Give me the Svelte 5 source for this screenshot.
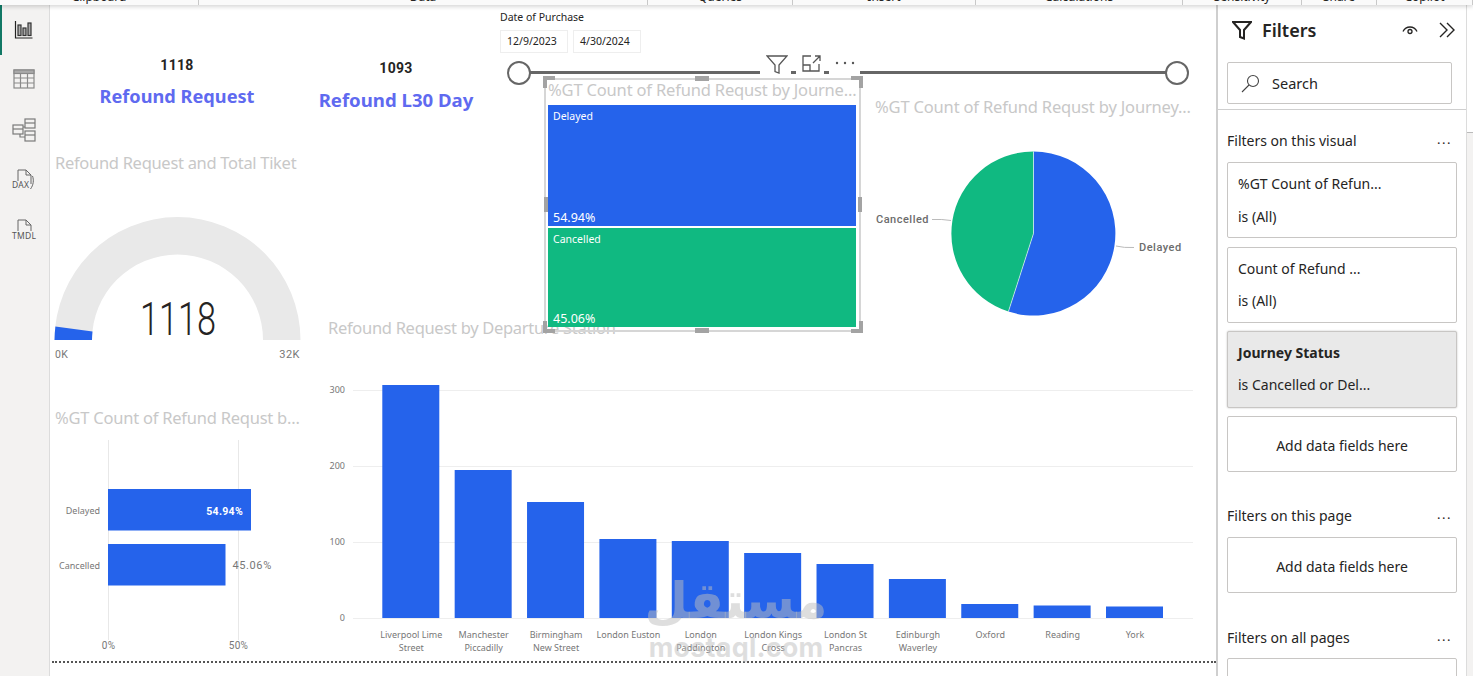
<script>
  const ribbon = [
    ['Clipboard', 199], ['Data', 449], ['Queries', 145], ['Insert', 183],
    ['Calculations', 207], ['Sensitivity', 119], ['Share', 75], ['Copilot', 96]
  ];
  const grid = [[300, 390], [200, 466], [100, 542], [0, 618]];
  const base = 618;
  const stations = [
    { top: 385, l: ['Liverpool Lime', 'Street'] },
    { top: 470, l: ['Manchester', 'Piccadilly'] },
    { top: 502, l: ['Birmingham', 'New Street'] },
    { top: 539, l: ['London Euston'] },
    { top: 541, l: ['London', 'Paddington'] },
    { top: 553, l: ['London Kings', 'Cross'] },
    { top: 564, l: ['London St', 'Pancras'] },
    { top: 579, l: ['Edinburgh', 'Waverley'] },
    { top: 604, l: ['Oxford'] },
    { top: 605.5, l: ['Reading'] },
    { top: 606.5, l: ['York'] }
  ];
  const barX = (i) => 382.3 + i * 72.37;
</script>

<div class="app">
  <header class="ribbon">
    {#each ribbon as [name, width]}
      <div class="group" style="width:{width}px"><span>{name}</span></div>
    {/each}
  </header>

  <div class="body">
    <nav class="rail">
      <div class="rail-item active">
        <svg width="20" height="20" viewBox="0 0 20 20" fill="none" stroke="#333" stroke-width="1.2">
          <path d="M1.5 1v17h17" stroke="#222"/>
          <rect x="4" y="5" width="3" height="10.5" fill="#aaa"/>
          <rect x="9" y="8" width="3" height="7.5" fill="#aaa"/>
          <rect x="14" y="3" width="3" height="12.5" fill="#aaa"/>
        </svg>
      </div>
      <div class="rail-item table-icon">
        <svg width="22" height="20" viewBox="0 0 22 20" fill="none" stroke="#8a8a8a" stroke-width="1.2">
          <rect x="1" y="1" width="20" height="18" fill="#f3f2f1"/>
          <rect x="1" y="1" width="20" height="3.5" fill="#a9a9a9"/>
          <path d="M1 9h20M1 14h20M7.5 4v15M14.500 4v15"/>
        </svg>
      </div>
      <div class="rail-item">
        <svg width="24" height="24" viewBox="0 0 24 24" fill="none" stroke="#7a7a7a" stroke-width="1.2">
          <rect x="1" y="7" width="10" height="9"/><path d="M1 11h10"/>
          <rect x="13" y="1" width="10" height="9"/><path d="M13 5h10"/>
          <rect x="13" y="13" width="10" height="10"/><path d="M13 17h10"/>
          <path d="M11 9h2M8 16v3h5"/>
        </svg>
      </div>
      <div class="rail-item">
        <svg width="24" height="24" viewBox="0 0 24 24" fill="none" stroke="#666" stroke-width="1">
          <path d="M6 13V2h8l5 5v9M14 2v5h5M20.500 8c1.500 4 1 9-2 13"/>
          <text x="0" y="20" class="rail-txt">DAX</text>
        </svg>
      </div>
      <div class="rail-item">
        <svg width="26" height="24" viewBox="0 0 26 24" fill="none" stroke="#666" stroke-width="1">
          <path d="M7 13V2h8l5 5v6M15 2v5h5"/>
          <text x="1" y="21" class="rail-txt">TMDL</text>
        </svg>
      </div>
    </nav>

    <main class="canvas">
      <section class="kpi kpi-a">
        <div class="kpi-num">1118</div>
        <div class="kpi-label">Refound Request</div>
      </section>
      <section class="kpi kpi-b">
        <div class="kpi-num">1093</div>
        <div class="kpi-label">Refound L30 Day</div>
      </section>

      <section class="visual gauge">
        <h2 class="title tight">Refound Request and Total Tiket</h2>
        <svg viewBox="50 200 260 170" class="plot">
          <path d="M54.500 340A123 123 0 0 1 300.500 340H263A85.500 85.500 0 0 0 92 340Z" fill="#e9e9e9"/>
          <path d="M54.500 340A123 123 0 0 1 55.400 326.500L92.500 331.500A85.500 85.500 0 0 0 92 340Z" fill="#2563eb"/>
          <text x="178" y="335" class="gauge-val" text-anchor="middle" textLength="76" lengthAdjust="spacingAndGlyphs">1118</text>
          <text x="55" y="358" class="din">0K</text>
          <text x="300" y="358" class="din big" text-anchor="end">32K</text>
        </svg>
      </section>

      <section class="visual hbar">
        <h2 class="title">%GT Count of Refund Requst b...</h2>
        <svg viewBox="50 430 260 225" class="plot">
          <path d="M108.500 440V640M238.500 440V640" stroke="#e8e8e8"/>
          <rect x="108" y="489" width="143" height="41.500" fill="#2563eb"/>
          <rect x="108" y="544" width="117.500" height="41.500" fill="#2563eb"/>
          <text x="100" y="514" class="seg" text-anchor="end">Delayed</text>
          <text x="100" y="569" class="seg" text-anchor="end">Cancelled</text>
          <text x="243" y="514.500" class="din val-in" text-anchor="end">54.94%</text>
          <text x="232.500" y="569" class="din wide">45.06%</text>
          <text x="108.500" y="649" class="din small" text-anchor="middle">0%</text>
          <text x="238.500" y="649" class="din small" text-anchor="middle">50%</text>
        </svg>
      </section>

      <section class="visual column">
        <h2 class="title tight">Refound Request by Departure Station</h2>
        <svg viewBox="320 370 880 290" class="plot">
          {#each grid as [v, y]}
            <path d="M353 {y + 0.5}H1193" stroke="#eeeeee"/>
            <text x="345" y={y + 3} class="seg" text-anchor="end">{v}</text>
          {/each}
          {#each stations as s, i}
            <rect x={barX(i)} y={s.top} width="57" height={base - s.top} fill="#2563eb"/>
            {#each s.l as line, j}
              <text x={barX(i) + 29} y={638 + j * 13} class="seg" text-anchor="middle">{line}</text>
            {/each}
          {/each}
        </svg>
      </section>

      <section class="visual pie">
        <h2 class="title loose">%GT Count of Refund Requst by Journey...</h2>
        <svg viewBox="860 130 340 200" class="plot">
          <path d="M1033.500 233.500V151.500A82 82 0 1 1 1008.400 311.600Z" fill="#2563eb"/>
          <path d="M1033.500 233.500L1008.400 311.600A82 82 0 0 1 1033.500 151.500Z" fill="#10b981"/>
          <path d="M1033.500 233.500V151.500M1033.500 233.500L1008.400 311.600" stroke="#fff" stroke-width=".6"/>
          <path d="M932 219.500Q942 219 951 220.500M1116 246Q1124 248 1134 247.500" fill="none" stroke="#bbb"/>
          <text x="876" y="223" class="din pie-l">Cancelled</text>
          <text x="1139" y="251" class="din pie-l">Delayed</text>
        </svg>
      </section>

      <section class="visual treemap">
        <h2 class="title loose">%GT Count of Refund Requst by Journe...</h2>
        <div class="tiles">
          <div class="tile blue"><span>Delayed</span><strong>54.94%</strong></div>
          <div class="tile green"><span>Cancelled</span><strong>45.06%</strong></div>
        </div>
      </section>
      <i class="h tl"></i><i class="h tr"></i><i class="h bl"></i><i class="h br"></i>
      <i class="h tm"></i><i class="h bm"></i><i class="h ml"></i><i class="h mr"></i>

      <section class="slicer">
        <div class="sl-title">Date of Purchase</div>
        <div class="dates"><span>12/9/2023</span><span>4/30/2024</span></div>
        <div class="track"><i class="knob"></i><i class="knob"></i></div>
      </section>

      <div class="vis-head">
        <svg width="22" height="19" viewBox="0 0 22 19" fill="none" stroke="#555" stroke-width="1.300">
          <path d="M1 1h20l-8 9v8l-4-1.500V10Z"/>
        </svg>
        <i class="dash"></i>
        <svg width="19" height="18" viewBox="0 0 19 18" fill="none" stroke="#555" stroke-width="1.300">
          <path d="M9 1H1v15h16V9M1 10h7v6M11 8l7-7M13 1h5v5"/>
        </svg>
        <i class="dash"></i>
        <svg class="dots" width="20" height="4" viewBox="0 0 20 4" fill="#555">
          <circle cx="2" cy="2" r="1.200"/><circle cx="10" cy="2" r="1.200"/><circle cx="18" cy="2" r="1.200"/>
        </svg>
      </div>

      <div class="watermark">
        <div class="wm-ar" lang="ar" dir="rtl">مستقل</div>
        <div class="wm-en">mostaql.com</div>
      </div>
      <div class="page-edge"></div>
    </main>

    <aside class="filters">
      <div class="f-head">
        <svg width="20" height="19" viewBox="0 0 20 19" fill="none" stroke="#252423" stroke-width="2">
          <path d="M1 1h18l-7 8v8.500l-4-1.500V9Z"/>
        </svg>
        <h1>Filters</h1>
        <svg class="eye" width="16" height="10" viewBox="0 0 16 10" fill="none" stroke="#252423" stroke-width="1.300">
          <path d="M1 6.500C4 .5 12 .5 15 6.500"/><circle cx="8" cy="6.500" r="2"/>
        </svg>
        <svg width="16" height="16" viewBox="0 0 16 16" fill="none" stroke="#252423" stroke-width="1.400">
          <path d="M1 1l7 7-7 7M8 1l7 7-7 7"/>
        </svg>
      </div>
      <div class="search">
        <svg width="19" height="19" viewBox="0 0 19 19" fill="none" stroke="#444" stroke-width="1.100">
          <circle cx="12" cy="7" r="5.500"/><path d="M8 11l-7 7"/>
        </svg>
        <span>Search</span>
      </div>
      <div class="f-body">
        <div class="f-sec first"><span>Filters on this visual</span><b>...</b></div>
        <div class="card"><p>%GT Count of Refun...</p><p>is (All)</p></div>
        <div class="card second"><p>Count of Refund ...</p><p>is (All)</p></div>
        <div class="card sel"><p><strong>Journey Status</strong></p><p>is Cancelled or Del...</p></div>
        <div class="card add">Add data fields here</div>
        <div class="f-sec"><span>Filters on this page</span><b>...</b></div>
        <div class="card add">Add data fields here</div>
        <div class="f-sec last"><span>Filters on all pages</span><b>...</b></div>
        <div class="card add"></div>
      </div>
    </aside>
    <div class="strip"><div class="strip-top"></div></div>
  </div>
</div>

<style>
  :global(body) { margin: 0; background: #fff; }
  .app {
    width: 1473px; height: 676px; overflow: hidden; position: relative;
    display: flex; flex-direction: column;
    font-family: "Noto Sans", "Open Sans", sans-serif; color: #252423;
  }
  .ribbon {
    display: flex; height: 5px; flex: none; overflow: hidden; background: #fafafa;
    box-shadow: 0 1px 5px rgba(0,0,0,.22); position: relative; z-index: 9;
  }
  .group {
    flex: none; box-sizing: border-box; border-right: 1px solid #c9c9c9;
    text-align: center; font-size: 12px; line-height: 16px; height: 5px;
  }
  .group span { display: block; margin-top: -11px; }
  .body { flex: 1; display: flex; min-height: 0; }
  .rail {
    width: 50px; flex: none; box-sizing: border-box; background: #f3f2f1;
    border-right: 1px solid #dcdcdc; display: flex; flex-direction: column;
  }
  .rail-item { height: 50px; display: flex; align-items: center; justify-content: center; padding-right: 1px; box-sizing: border-box; }
  .rail-item.active { border-left: 2px solid #117865; padding-right: 3px; }
  .table-icon { padding-bottom: 2px; }
  .rail-txt { font: 400 8.5px "Noto Sans", sans-serif; fill: #555; stroke: none; letter-spacing: .3px; }

  .canvas { position: relative; flex: 1; min-width: 0; overflow: hidden; background: #fff; }

  .kpi { position: absolute; text-align: center; width: 220px; }
  .kpi-a { left: 17px; top: 50px; }
  .kpi-b { left: 236px; top: 53px; }
  .kpi-num { font: 700 14px/20px Roboto, sans-serif; letter-spacing: .3px; color: #252423; }
  .kpi-label { font-weight: 700; font-size: 18.200px; line-height: 24px; color: #5f6af0; margin-top: 9px; }
  .kpi-b .kpi-label { margin-top: 10px; font-size: 18.600px; }

  .visual { position: absolute; display: flex; flex-direction: column; }
  .title {
    margin: 0; font-weight: 400; font-size: 16.500px; line-height: 22px; color: #c8c8c8;
    white-space: nowrap; letter-spacing: -.23px;
  }
  .title.tight { letter-spacing: -.3px; }
  .title.loose { letter-spacing: -.17px; }
  .plot { position: absolute; display: block; }

  .gauge { left: 5px; top: 147px; width: 260px; height: 220px; }
  .gauge .plot { left: -5px; top: 48px; width: 260px; height: 170px; }
  .gauge-val { font: 300 46px Roboto, sans-serif; fill: #252423; }
  .din { font: 400 10.500px Roboto, sans-serif; fill: #777; letter-spacing: .3px; }
  .big { font-size: 11px; letter-spacing: .5px; }
  .wide { font-size: 11px; letter-spacing: .6px; }
  .val-in { fill: #fff; font-weight: 700; }
  .small { font-size: 10px; }
  .pie-l { fill: #6c6c6c; font-size: 11px; font-weight: 500; letter-spacing: .5px; }
  .seg { font: 400 9px "Noto Sans", sans-serif; fill: #777; }

  .hbar { left: 5px; top: 402px; width: 260px; height: 250px; }
  .hbar .plot { left: -5px; top: 23px; width: 260px; height: 225px; }

  .column { left: 278px; top: 312px; width: 880px; height: 340px; }
  .column .plot { left: -8px; top: 53px; width: 880px; height: 290px; }

  .pie { left: 825px; top: 91px; width: 340px; height: 235px; }
  .pie .plot { left: -15px; top: 34px; width: 340px; height: 200px; }

  .treemap {
    left: 494px; top: 73px; width: 317px; height: 254px; box-sizing: border-box;
    border: 2px solid #d6d6d6; padding: 0 3px 3px 2px; background: transparent;
  }
  .treemap .title { line-height: 20px; height: 25px; margin-bottom: 0; }
  .tiles { display: flex; flex-direction: column; gap: 2px; flex: 1; }
  .tile {
    display: flex; flex-direction: column; justify-content: space-between; color: #fff;
    padding: 4px 4px 0 5px; font-size: 10.500px; line-height: 15px;
  }
  .tile strong { font-weight: 400; font-size: 12.500px; line-height: 16px; }
  .blue { background: #2563eb; height: 121px; box-sizing: border-box; }
  .green { background: #10b981; flex: 1; }

  .h { position: absolute; background: #a3a3a3; z-index: 4; }
  .tm, .bm { left: 645px; width: 14px; height: 5px; }
  .tm { top: 71px; } .bm { top: 323px; }
  .ml, .mr { top: 192px; width: 4px; height: 15px; }
  .ml { left: 494px; } .mr { left: 808px; }
  .tl, .tr, .bl, .br { width: 12px; height: 12px; background: none; }
  .tl { left: 493px; top: 71px; border-left: 4px solid #a3a3a3; border-top: 4px solid #a3a3a3; width: 8px; height: 8px; }
  .tr { left: 801px; top: 71px; border-right: 4px solid #a3a3a3; border-top: 4px solid #a3a3a3; width: 8px; height: 8px; }
  .bl { left: 493px; top: 316px; border-left: 4px solid #a3a3a3; border-bottom: 4px solid #a3a3a3; width: 8px; height: 8px; }
  .br { left: 801px; top: 316px; border-right: 4px solid #a3a3a3; border-bottom: 4px solid #a3a3a3; width: 8px; height: 8px; }

  .slicer { position: absolute; left: 450px; top: 5px; width: 690px; z-index: 2; }
  .sl-title { font-size: 10.500px; line-height: 14px; color: #252423; }
  .dates { display: flex; gap: 5px; margin-top: 6px; }
  .dates span {
    width: 68px; height: 23px; box-sizing: border-box; border: 1px solid #eeeeee;
    font-size: 10.500px; line-height: 21px; padding-left: 6px;
  }
  .track {
    position: relative; margin: 18px 0 0 18px; width: 660px; height: 0;
    border-top: 3px solid #666; display: flex; justify-content: space-between;
  }
  .knob {
    width: 20px; height: 20px; border: 2px solid #666; border-radius: 50%; background: #fff;
    margin: -13px -11px 0; flex: none;
  }

  .vis-head {
    position: absolute; left: 710px; top: 48px; width: 100px; height: 24px; background: #fff;
    display: flex; align-items: flex-start; padding: 2px 0 0 6px; box-sizing: border-box; z-index: 3;
  }
  .dash { width: 5px; height: 3px; background: #666; margin: 16px 6px 0 3px; flex: none; }
  .dots { margin-top: 6px; }

  .watermark {
    position: absolute; left: 586px; top: 565px; width: 200px; text-align: center;
    color: rgba(190,190,190,.5); z-index: 6; pointer-events: none;
  }
  .wm-ar { font: 700 50px/62px "DejaVu Sans", sans-serif; }
  .wm-en { font: 700 27px/28px Inter, sans-serif; letter-spacing: .2px; margin-top: 2px; }

  .page-edge {
    position: absolute; left: 2px; right: 0; top: 656px; border-top: 2px dotted #555; z-index: 1;
  }

  .filters {
    width: 251px; flex: none; box-sizing: border-box; background: #fff; overflow: hidden;
    border-left: 2px solid #cfcfcf; border-right: 1px solid #dcdcdc; display: flex; flex-direction: column;
  }
  .f-head { display: flex; align-items: center; height: 50px; padding: 0 11px 0 14px; flex: none; box-sizing: border-box; margin-top: 0; }
  .f-head h1 { margin: 0 0 0 10px; font-size: 18px; font-weight: 600; flex: 1; color: #252423; }
  .eye { margin-right: 21px; }
  .search {
    margin: 7px 14px 0 9px; height: 42px; flex: none; box-sizing: border-box;
    border: 1px solid #c8c6c4; border-radius: 2px;
    display: flex; align-items: center; padding-left: 13px; gap: 12px; font-size: 14.500px;
  }
  .f-body { margin-top: 5px; border-top: 1px solid #cfcfcf; padding: 0 9px; flex: 1; }
  .f-sec {
    display: flex; justify-content: space-between; align-items: center;
    font-size: 14px; height: 20px; margin: 33px 5px 12px 0; 
  }
  .f-sec.first { margin-top: 20px; margin-bottom: 12px; }
  .f-sec.last { margin-top: 34px; margin-bottom: 11px; }
  .f-sec b { font-weight: 400; letter-spacing: 1.500px; font-size: 13px; transform: translateY(-1px); }
  .card {
    box-sizing: border-box; width: 230px; height: 76px; border: 1px solid #c8c6c4; border-radius: 2px;
    padding: 10px 10px; margin-bottom: 9px; font-size: 14px;
  }
  .card p { margin: 0; line-height: 22px; height: 33px; }
  .card.second p:first-child { height: 32px; }
  .card.sel { background: #e9e9e9; box-shadow: 0 0 2px rgba(0,0,0,.25); height: 77px; margin-top: -1px; margin-bottom: 8px; padding-top: 10px; }
  .card.sel p:first-child { height: 32px; }
  .card.add {
    height: 56px; padding: 2px 0 0; display: flex; align-items: center; justify-content: center; margin-bottom: 0;
  }
  .strip { width: 6px; flex: none; background: #f3f2f1; }
  .strip-top { height: 127px; background: #fff; border-bottom: 1px solid #bbb; }
</style>
